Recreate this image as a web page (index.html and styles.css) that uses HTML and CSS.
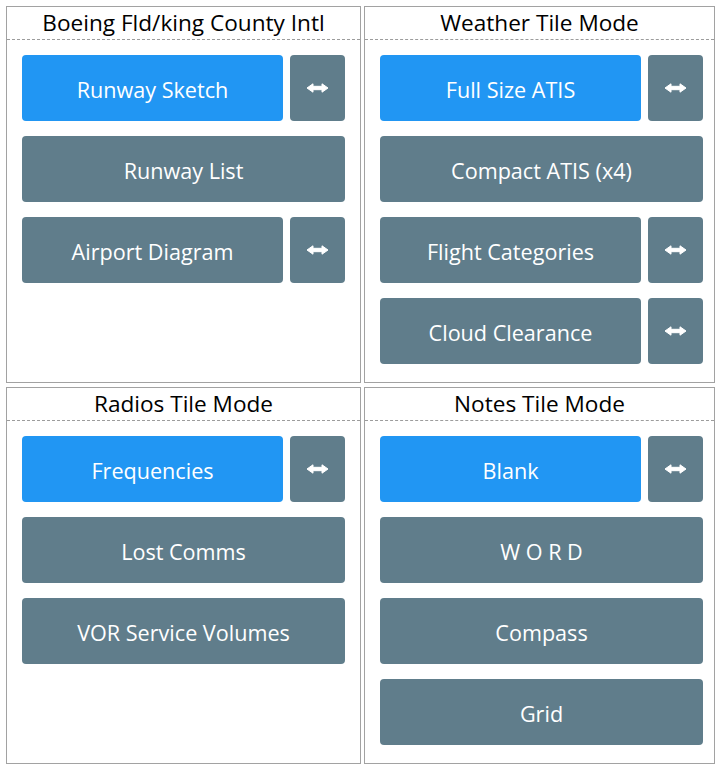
FILE: index.html
```html
<!DOCTYPE html>
<html>
<head>
<meta charset="utf-8">
<link rel="stylesheet" href="styles.css">
</head>
<body>
<svg width="0" height="0" class="defs">
  <symbol id="arr" viewBox="0 0 23 10">
    <path d="M1 5 L7 0.8 L7 3.3 L16 3.3 L16 0.8 L22 5 L16 9.2 L16 6.7 L7 6.7 L7 9.2 Z" fill="#fff" stroke="#fff" stroke-width="1" stroke-linejoin="round"/>
  </symbol>
</svg>
<div class="grid">
  <section class="panel">
    <div class="head">Boeing Fld/king County Intl</div>
    <div class="body">
      <div class="row"><div class="btn active">Runway Sketch</div><div class="swap"><svg class="ico"><use href="#arr"/></svg></div></div>
      <div class="row"><div class="btn">Runway List</div></div>
      <div class="row"><div class="btn">Airport Diagram</div><div class="swap"><svg class="ico"><use href="#arr"/></svg></div></div>
    </div>
  </section>
  <section class="panel right">
    <div class="head">Weather Tile Mode</div>
    <div class="body">
      <div class="row"><div class="btn active">Full Size ATIS</div><div class="swap"><svg class="ico"><use href="#arr"/></svg></div></div>
      <div class="row"><div class="btn">Compact ATIS (x4)</div></div>
      <div class="row"><div class="btn">Flight Categories</div><div class="swap"><svg class="ico"><use href="#arr"/></svg></div></div>
      <div class="row"><div class="btn">Cloud Clearance</div><div class="swap"><svg class="ico"><use href="#arr"/></svg></div></div>
    </div>
  </section>
  <section class="panel">
    <div class="head">Radios Tile Mode</div>
    <div class="body">
      <div class="row"><div class="btn active">Frequencies</div><div class="swap"><svg class="ico"><use href="#arr"/></svg></div></div>
      <div class="row"><div class="btn">Lost Comms</div></div>
      <div class="row"><div class="btn">VOR Service Volumes</div></div>
    </div>
  </section>
  <section class="panel right">
    <div class="head">Notes Tile Mode</div>
    <div class="body">
      <div class="row"><div class="btn active">Blank</div><div class="swap"><svg class="ico"><use href="#arr"/></svg></div></div>
      <div class="row"><div class="btn">W O R D</div></div>
      <div class="row"><div class="btn">Compass</div></div>
      <div class="row"><div class="btn">Grid</div></div>
    </div>
  </section>
</div>
</body>
</html>
```
FILE: styles.css
```css
html, body {
  margin: 0;
  padding: 0;
  background: #fff;
}
body {
  font-family: "Open Sans", "Noto Sans", sans-serif;
}
.defs {
  position: absolute;
}
.grid {
  display: grid;
  grid-template-columns: 355px 351px;
  column-gap: 3px;
  row-gap: 4px;
  padding: 6px 0 0 6px;
}
.panel {
  border: 1px solid #a2a2a2;
  display: flex;
  flex-direction: column;
}
.head {
  height: 32px;
  line-height: 31px;
  text-align: center;
  font-size: 22.6px;
  color: #000;
  border-bottom: 1px dashed #9c9c9c;
}
.body {
  padding: 15px 15px 18px 15px;
  display: flex;
  flex-direction: column;
  gap: 15px;
}
.right .body {
  padding-right: 11px;
}
.row {
  display: flex;
  gap: 7px;
  height: 66px;
}
.btn {
  flex: 1;
  background: #607d8b;
  color: #fff;
  border-radius: 4px;
  display: flex;
  align-items: center;
  justify-content: center;
  font-size: 21.6px;
  padding-top: 2px;
  box-sizing: border-box;
}
.btn.active {
  background: #2196f3;
}
.swap {
  width: 55px;
  flex: none;
  background: #607d8b;
  border-radius: 4px;
  display: flex;
  align-items: center;
  justify-content: center;
}
.ico {
  width: 23px;
  height: 10px;
}
```
